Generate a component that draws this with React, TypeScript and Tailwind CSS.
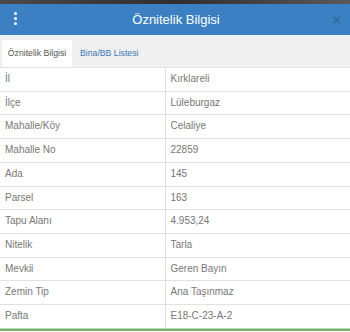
const rows: [string, string][] = [
  ["İl", "Kırklareli"],
  ["İlçe", "Lüleburgaz"],
  ["Mahalle/Köy", "Celaliye"],
  ["Mahalle No", "22859"],
  ["Ada", "145"],
  ["Parsel", "163"],
  ["Tapu Alanı", "4.953,24"],
  ["Nitelik", "Tarla"],
  ["Mevkii", "Geren Bayın"],
  ["Zemin Tip", "Ana Taşınmaz"],
  ["Pafta", "E18-C-23-A-2"],
];

export default function App() {
  return (
    <div
      className="w-[350px] h-[332px] overflow-hidden bg-white"
      style={{ fontFamily: '"Liberation Sans", Arial, sans-serif' }}
    >
      <div className="h-[4px] bg-gradient-to-r from-[#4a4a4a] via-[#2e2e2e] to-[#5a5a5a]" />
      <div className="relative flex h-[31px] items-center justify-center bg-[#3b80c2]">
        <div className="absolute left-[14px] top-[8px] flex flex-col gap-[2px]">
          <span className="block h-[3px] w-[3px] rounded-full bg-white" />
          <span className="block h-[3px] w-[3px] rounded-full bg-white" />
          <span className="block h-[3px] w-[3px] rounded-full bg-white" />
        </div>
        <span className="pl-[2px] text-[13px] text-white">Öznitelik Bilgisi</span>
        <span className="absolute right-[9px] top-[8px] text-[15px] font-bold leading-none text-[#2c5f8f] opacity-60">
          ×
        </span>
      </div>
      <div className="flex h-[32px] items-end bg-[#f0f0f0] pl-[2px]">
        <div className="flex h-[27px] w-[70px] items-center justify-center bg-white text-[8.7px] text-[#555]">
          Öznitelik Bilgisi
        </div>
        <div className="flex h-[27px] items-center px-[8px] text-[8.7px] text-[#3778b5]">
          Bina/BB Listesi
        </div>
      </div>
      <table className="w-full border-collapse text-[10px] text-[#777]">
        <tbody>
          {rows.map(([k, v]) => (
            <tr key={k} className="border-t border-[#e2e2e2]">
              <td className="w-[165px] border-r border-[#e2e2e2] px-[5px] py-[4px] leading-[14.7px]">{k}</td>
              <td className="px-[5px] py-[4px] leading-[14.7px]">{v}</td>
            </tr>
          ))}
        </tbody>
      </table>
      <div className="h-[1px] bg-[#b6dcb0]" />
      <div className="h-[2px] bg-[#6fb46a]" />
    </div>
  );
}
